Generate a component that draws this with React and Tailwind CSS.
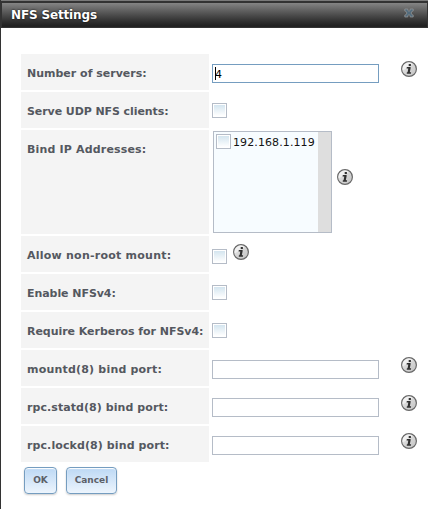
import React from "react";

function InfoIcon({ className = "" }) {
  return (
    <svg className={"block size-4 shrink-0 " + className} viewBox="0 0 16 16">
      <defs>
        <linearGradient id="disc" x1="0" y1="0" x2="1" y2="1">
          <stop offset="0" stopColor="#f0f0f0" />
          <stop offset="0.45" stopColor="#d8d8d8" />
          <stop offset="1" stopColor="#c2c2c2" />
        </linearGradient>
      </defs>
      <circle cx="8" cy="8" r="7.4" fill="url(#disc)" stroke="#686868" strokeWidth="1.2" />
      <path d="M1.6 9.5A6.5 6.5 0 0 1 12 2.9C9 4 6 7 1.6 9.5Z" fill="#fff" opacity="0.5" />
      <path d="M7.7 3h2.2v2H7.7zM5.8 6h3.8v1.2l-.8 4h1.3l-.2 1.6H5.7l.2-1.5h.7l.7-3.9H5.6z" fill="#303030" />
    </svg>
  );
}

function Check({ className = "" }) {
  return (
    <span className={"block size-[15px] shrink-0 border border-[#b5bcc7] bg-white p-px " + className}>
      <span className="block size-full bg-linear-to-b from-[#d4e5ef] to-white" />
    </span>
  );
}

function Row({ label, tall, tracking = "", children }) {
  return (
    <div className={"flex " + (tall ? "h-[104px]" : "h-9")}>
      <div
        className={
          "w-[188px] shrink-0 whitespace-nowrap bg-[#f4f4f4] pl-1.5 pt-[13px] text-[11px] leading-[14px] font-bold text-[#545860] " +
          tracking
        }
      >
        {label}
      </div>
      <div className="flex flex-1 items-start pl-[3px]">{children}</div>
    </div>
  );
}

function TextField({ value, focused }) {
  return (
    <>
      <div
        className={
          "mt-2.5 flex h-[19px] w-[167px] items-center border bg-white pl-[2px] text-[11px] leading-[13px] text-black " +
          (focused ? "border-[#759dc0]" : "border-[#b5bcc7]")
        }
      >
        {focused && <span className="-mr-px h-[13px] w-px bg-black" />}
        <span className="pt-px">{value}</span>
      </div>
      <InfoIcon className="mt-[7px] ml-[22px]" />
    </>
  );
}

function Button({ children, className }) {
  return (
    <button
      className={
        "flex h-[27px] items-center justify-center rounded-[4px] border border-[#759dc0] bg-linear-to-b from-[#bcd8f4] to-[#edf5fd] text-[9px] font-bold text-[#5c6068] shadow-[0_1px_2px_rgba(0,0,0,0.2),inset_0_1px_1px_#fff] " +
        className
      }
    >
      {children}
    </button>
  );
}

export default function App() {
  return (
    <div className="h-[509px] w-[428px] overflow-hidden border-l border-[#333] bg-white font-['DejaVu_Sans',sans-serif]">
      <header className="flex h-7 items-center justify-between border-t border-[#7a7a7a] bg-[#333] pr-px pl-px">
        <div className="mt-px flex h-6 flex-1 items-center justify-between border-b border-[#222] bg-linear-to-b from-[#858585] from-0% via-[#303030] via-80% to-[#202020] pr-[13px] pl-[9px]">
          <h1 className="text-[12px] leading-4 font-bold tracking-[-0.15px] text-white [text-shadow:0_0_2px_#000]">NFS Settings</h1>
          <svg className="-mt-[3px] size-[10px]" viewBox="0 0 10 10">
            <path d="M.8 1h3v1.1L5 3.5l1.2-1.4V1h3v2h-.7L7 5l1.5 2h.7v2h-3V7.9L5 6.5 3.8 7.9V9h-3V7h.7L3 5 1.5 3H.8z" fill="#526b7c" stroke="#999" strokeWidth="0.7" />
          </svg>
        </div>
      </header>
      <main className="pt-[26px] pl-5">
        <div className="flex flex-col gap-0.5">
          <Row label="Number of servers:"><TextField value="4" focused /></Row>
          <Row label="Serve UDP NFS clients:" tracking="tracking-[-0.08px]"><Check className="mt-[11px]" /></Row>
          <Row label="Bind IP Addresses:" tall tracking="tracking-[0.17px]">
            <div className="mt-px ml-px flex h-[102px] w-[119px] border border-[#b5bcc7] bg-[#f7fcff]">
              <div className="flex flex-1 items-start gap-0.5 pt-0.5 pl-0.5">
                <Check />
                <span className="pt-0.5 text-[11px] leading-[14px] tracking-[0.1px] text-[#131313]">192.168.1.119</span>
              </div>
              <div className="w-[13px] shrink-0 bg-[#dedede]" />
            </div>
            <InfoIcon className="mt-[39px] ml-[5px]" />
          </Row>
          <Row label="Allow non-root mount:" tracking="tracking-[0.24px]">
            <Check className="mt-[13px]" />
            <InfoIcon className="mt-2 ml-1.5" />
          </Row>
          <Row label="Enable NFSv4:" tracking="tracking-[-0.06px]"><Check className="mt-[11px]" /></Row>
          <Row label="Require Kerberos for NFSv4:" tracking="tracking-[-0.04px]"><Check className="mt-[11px]" /></Row>
          <Row label="mountd(8) bind port:" tracking="tracking-[0.2px]"><TextField /></Row>
          <Row label="rpc.statd(8) bind port:" tracking="tracking-[0.07px]"><TextField /></Row>
          <Row label="rpc.lockd(8) bind port:" tracking="tracking-[0.1px]"><TextField /></Row>
        </div>
        <div className="mt-[5px] ml-[3px] flex gap-[9px]">
          <Button className="w-[33px]">OK</Button>
          <Button className="w-[51px]">Cancel</Button>
        </div>
      </main>
    </div>
  );
}
